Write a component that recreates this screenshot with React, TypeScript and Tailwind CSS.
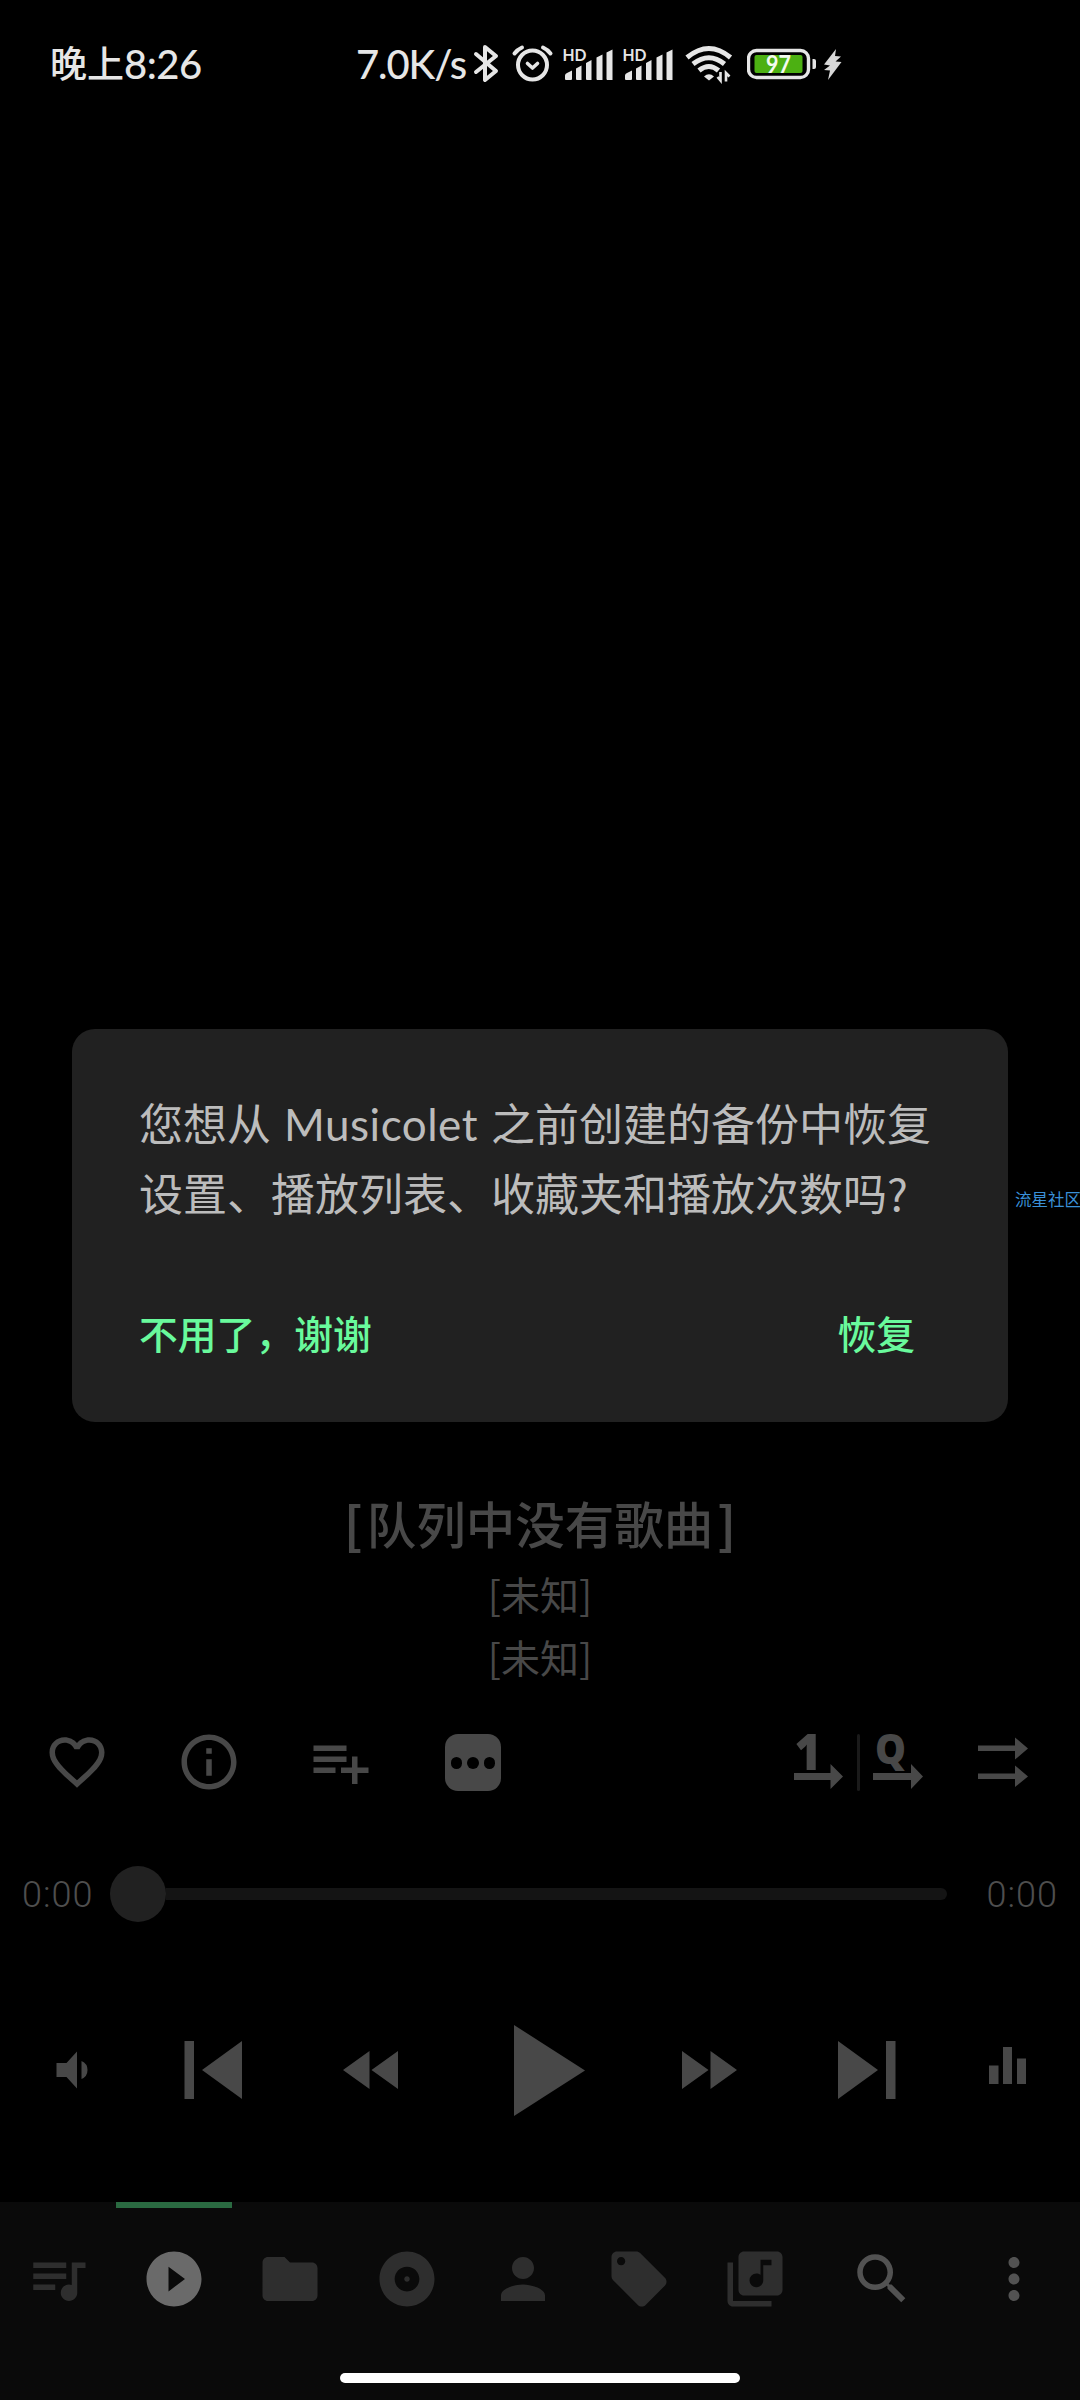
import type { ReactNode } from "react"
import {
  MdAlbum,
  MdFavoriteBorder,
  MdFolder,
  MdInfoOutline,
  MdLibraryMusic,
  MdLocalOffer,
  MdMoreVert,
  MdPerson,
  MdPlayCircleFilled,
  MdQueueMusic,
  MdSearch,
} from "react-icons/md"

const tabs = [
  { name: "queue", icon: <MdQueueMusic /> },
  { name: "player", icon: <MdPlayCircleFilled /> },
  { name: "folders", icon: <MdFolder /> },
  { name: "albums", icon: <MdAlbum /> },
  { name: "artists", icon: <MdPerson /> },
  { name: "genres", icon: <MdLocalOffer /> },
  { name: "playlists", icon: <MdLibraryMusic /> },
]

function Signal() {
  return (
    <svg width="60" height="40" viewBox="0 0 60 40" fill="#e6e6e6" className="overflow-visible">
      <text x="-.5" y="16.500" fontSize="17" fontWeight="700" fontFamily="Lato" textLength="24" lengthAdjust="spacingAndGlyphs">HD</text>
      <path d="M2 35v-3.500q0-2 2-2.500l5-2.500v8.500q0 1-1 1H3q-1 0-1-1zM13 24.500l5.500-3V36H14q-1 0-1-1zM23 19l5.500-3V36H24q-1 0-1-1zM33.500 13.500l6-3V36h-5q-1 0-1-1zM43.500 8.500l6-3V36h-5q-1 0-1-1z" />
    </svg>
  )
}

function StatusBar() {
  return (
    <header className="h-[126px] shrink-0 flex items-start pt-[44px] pl-[50px] text-[#e6e6e6] font-medium">
      <div className="h-10 w-[306px] flex items-center whitespace-nowrap">
        <span className="mt-[-4px] text-[37px] leading-10 font-['Noto_Sans_CJK_SC',sans-serif]">晚上</span>
        <span className="text-[40px] leading-10 tracking-[-0.500px] font-['Lato',sans-serif]">8:26</span>
      </div>
      <div className="w-[117px] text-[40px] leading-10 tracking-[-1.100px] whitespace-nowrap font-['Lato',sans-serif]">7.0K/s</div>
      <svg width="28" height="40" viewBox="0 0 28 40" fill="none" stroke="#e6e6e6" strokeWidth="4" strokeLinejoin="round" strokeLinecap="round">
        <path d="M3 10l20 17-11 9V3l11 9L3 28" />
      </svg>
      <svg className="ml-[10px]" width="44" height="40" viewBox="0 0 44 40" fill="none" stroke="#e6e6e6" strokeWidth="4" strokeLinecap="round">
        <circle cx="21.500" cy="21" r="14.500" />
        <path d="M16.500 19.500l5 4.500 5-4.500" strokeLinejoin="round" strokeWidth="3.600" />
        <path d="M3.500 9.500Q6.500 5.500 11 3.500M39.500 9.500Q36.500 5.500 32 3.500" />
      </svg>
      <div className="flex pl-[8px]">
        <Signal />
        <Signal />
      </div>
      <svg className="ml-[2px]" width="50" height="40" viewBox="0 0 50 40" fill="none" stroke="#e6e6e6">
        <path d="M2 13.500Q24 -4.500 45.500 13.500" strokeWidth="5" />
        <path d="M8 20Q24 7.500 39.500 20" strokeWidth="5" />
        <path d="M14 26.500Q24 18.500 33.500 26.500" strokeWidth="5" />
        <path d="M24 36.500l-5-4q5-4.500 10 0z" fill="#e6e6e6" stroke="none" />
        <path d="M35.500 28v8.500l-3-3.500M41 37.500v-8.500l3.500 3.500" strokeWidth="2.600" />
      </svg>
      <svg className="ml-[12px]" width="72" height="40" viewBox="0 0 72 40">
        <rect x="1.500" y="6.500" width="60" height="27" rx="8" fill="none" stroke="#e6e6e6" strokeWidth="3.400" />
        <rect x="7.500" y="11" width="48" height="18" rx="2" fill="#4cb012" />
        <path d="M65.500 15h1.500q2 0 2 2v6q0 2-2 2h-1.500z" fill="#e6e6e6" />
        <text x="31.500" y="28.500" textAnchor="middle" fontFamily="Lato" fontWeight="700" fontSize="24" textLength="25" lengthAdjust="spacingAndGlyphs" fill="#f4fbef">97</text>
      </svg>
      <svg className="ml-[4px]" width="20" height="40" viewBox="0 0 20 40" fill="#d8d8d8">
        <path d="M13 5L1 20.500l6 1-6 4.500 6 .5L5 36l13.500-18-6-.5 5.500-5-6-.5z" />
      </svg>
    </header>
  )
}

function Cell({ children }: { children: ReactNode }) {
  return <button className="w-[132px] h-[132px] flex items-center justify-center text-[66px]">{children}</button>
}

function ActionRow() {
  return (
    <div className="h-[144px] flex items-center justify-between pl-[11px] pr-[10px]">
      <div className="flex">
        <Cell><MdFavoriteBorder /></Cell>
        <Cell><MdInfoOutline /></Cell>
        <Cell>
          <svg width="66" height="66" viewBox="0 0 24 24" fill="currentColor">
            <path d="M14 10H2v2h12v-2zm0-4H2v2h12V6zm4 8v-4h-2v4h-4v2h4v4h2v-4h4v-2h-4zM2 16h8v-2H2v2z" />
          </svg>
        </Cell>
        <Cell>
          <div className="w-[56px] h-[57px] rounded-[13px] bg-[#484848] flex items-center justify-center gap-[5px] pt-[2px]">
            <span className="size-[11.500px] rounded-full bg-black" />
            <span className="size-[11.500px] rounded-full bg-black" />
            <span className="size-[11.500px] rounded-full bg-black" />
          </div>
        </Cell>
      </div>
      <div className="flex items-center">
        <svg width="50" height="60" viewBox="0 0 50 60" fill="currentColor" className="overflow-visible">
          <text x="1.500" y="37.500" fontFamily="Open Sans" fontWeight="800" fontSize="50" textLength="27" lengthAdjust="spacingAndGlyphs">1</text>
          <path d="M1 41h36.500v-9L50 44.500 37.500 57v-9H1z" />
        </svg>
        <div className="ml-[14px] mr-[12px] w-[3px] h-[57px] rounded-full bg-[#1a1a1a]" />
        <svg width="52" height="60" viewBox="0 0 52 60" fill="currentColor" className="overflow-visible">
          <text x="3" y="31.500" fontFamily="Open Sans" fontWeight="800" fontSize="42" textLength="31" lengthAdjust="spacingAndGlyphs">Q</text>
          <path d="M1 41h38v-9L51 44.500 39 57v-9H1z" />
        </svg>
        <svg className="ml-[53px] mr-[41px]" width="52" height="60" viewBox="0 0 52 60" fill="currentColor">
          <path d="M1 13.500h37V5.500l13 11-13 11v-8.500H1zM1 41.500h37v-8l13 11L38 55v-8H1z" />
        </svg>
      </div>
    </div>
  )
}

function SeekBar() {
  return (
    <div className="h-[120px] flex items-center px-[22px] text-[36px] font-light text-[#4e4e4e] font-['Roboto',sans-serif]">
      <span className="w-[72px] pt-[2px] tracking-[1px]">0:00</span>
      <div className="ml-[16px] flex-1 flex items-center">
        <div className="size-[56px] rounded-full bg-[#212121]" />
        <div className="h-[12px] w-[781px] rounded-r-full bg-[#141414]" />
      </div>
      <span className="w-[72px] pt-[2px] text-right tracking-[1px]">0:00</span>
    </div>
  )
}

function Controls() {
  return (
    <div className="h-[232px] flex items-center pl-[56px]">
      <svg width="32" height="38" viewBox="0 0 32 38" fill="currentColor">
        <path d="M.5 12h10L21 .5v37L10.500 26H.5zM25.500 10q6 2.500 6 9t-6 9z" />
      </svg>
      <svg className="ml-[96px]" width="58" height="58" viewBox="0 0 58 58" fill="currentColor">
        <path d="M.5 0H10v58H.5zM58 0v58L18 29z" />
      </svg>
      <svg className="ml-[101px]" width="55" height="38" viewBox="0 0 55 38" fill="currentColor">
        <path d="M26.500 0v38L0 19zM55 0v38L28.500 19z" />
      </svg>
      <svg className="ml-[116px]" width="71" height="91" viewBox="0 0 71 91" fill="currentColor">
        <path d="M0 0l71 45.500L0 91z" />
      </svg>
      <svg className="ml-[97px]" width="55" height="38" viewBox="0 0 55 38" fill="currentColor">
        <path d="M0 0v38l26.500-19zM28.500 0v38L55 19z" />
      </svg>
      <svg className="ml-[101px]" width="58" height="58" viewBox="0 0 58 58" fill="currentColor">
        <path d="M57.500 0H48v58h9.500zM0 0v58l40-29z" />
      </svg>
      <svg className="ml-[93px] mb-[9px]" width="37" height="37" viewBox="0 0 37 37" fill="currentColor">
        <path d="M0 18.500h9.500V37H0zM14 0h9v37h-9zM28 11.500h9V37h-9z" />
      </svg>
    </div>
  )
}

function BottomNav() {
  return (
    <nav className="mt-[16px] h-[198px] shrink-0 bg-[#0a0a0a] flex flex-col items-center justify-between">
      <div className="w-full h-[154px] flex text-[66px] text-[#2e2e2e]">
        {tabs.map((tab) => (
          <button key={tab.name} className={tab.name === "player" ? "w-[116.200px] flex flex-col items-center text-[#6a6a6a]" : "w-[116.200px] flex flex-col items-center"}>
            <span className={tab.name === "player" ? "w-full h-[6px] bg-[#2a6a41]" : "w-full h-[6px]"} />
            <span className="mt-[38px]">{tab.icon}</span>
          </button>
        ))}
        <button className="ml-auto w-[132px] flex justify-center pt-[44px] text-[#525252]"><MdSearch /></button>
        <button className="w-[132px] flex justify-center pt-[44px] text-[#525252]"><MdMoreVert /></button>
      </div>
      <div className="mb-[17px] w-[400px] h-[10px] rounded-full bg-white" />
    </nav>
  )
}

function RestoreDialog() {
  return (
    <div className="absolute left-[72px] top-[1029px] w-[936px] h-[393px] rounded-[23px] bg-[#212121] pl-[67px] pt-[58px]">
      <p className="text-[44px] leading-[70px] text-[#bcbcbc] whitespace-nowrap">
        您想从
        <span className="inline-block w-[220px] leading-[60px] text-center font-['Lato',sans-serif] tracking-[0.500px]">Musicolet</span>
        之前创建的备份中恢复
        <br />
        设置、播放列表、收藏夹和播放次数吗?
      </p>
      <div className="mt-[75px] pr-[93px] flex justify-between text-[38.800px] leading-[60px] font-medium text-[#69fa9c]">
        <button>不用了，谢谢</button>
        <button>恢复</button>
      </div>
    </div>
  )
}

function App() {
  return (
    <div className="relative w-[1080px] h-[2400px] overflow-hidden bg-black flex flex-col text-[#484848] font-['Noto_Sans_CJK_SC',sans-serif]">
      <StatusBar />
      <div className="flex-1" />
      <div className="flex flex-col items-center pb-[2px]">
        <h1 className="h-[74px] flex text-[49.500px] leading-[70px] font-medium">
          <span className="mr-[4px] font-bold">[</span>
          队列中没有歌曲
          <span className="ml-[4px] font-bold">]</span>
        </h1>
        <p className="text-[39px] leading-[63px]">[未知]</p>
        <p className="text-[39px] leading-[63px]">[未知]</p>
      </div>
      <ActionRow />
      <SeekBar />
      <Controls />
      <BottomNav />
      <RestoreDialog />
      <div className="absolute left-[1015px] top-[1187px] whitespace-nowrap text-[16.500px] leading-[24px] text-[#3a90d8]">流星社区</div>
    </div>
  )
}

export default App
